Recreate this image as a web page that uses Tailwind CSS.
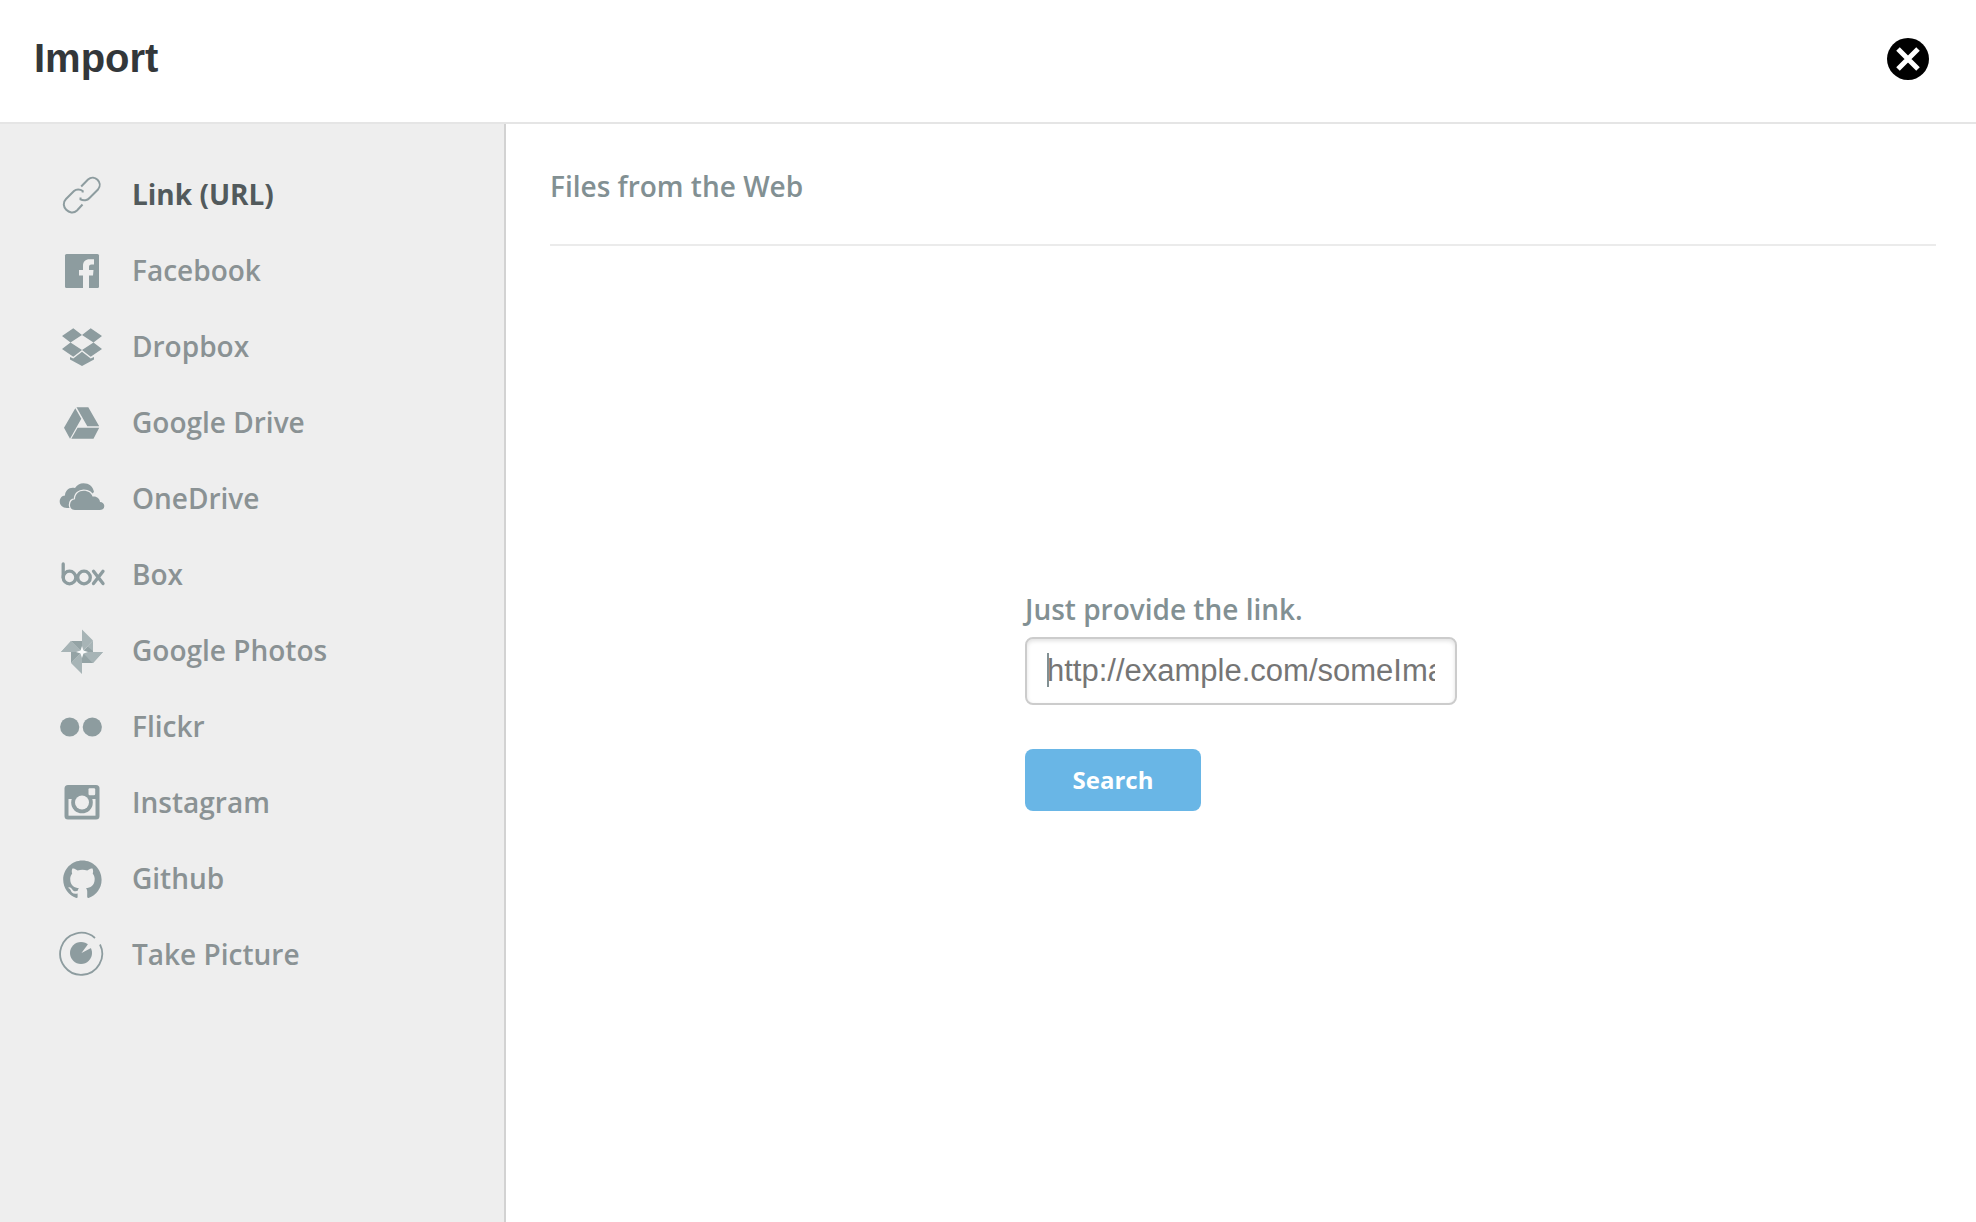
<!DOCTYPE html>
<html lang="en">
<head>
  <meta charset="UTF-8">
  <meta name="viewport" content="width=device-width, initial-scale=1.0">
  <title>Import</title>
  <script src="https://cdn.jsdelivr.net/npm/@tailwindcss/browser@4"></script>
</head>
<body class="flex min-h-screen flex-col bg-white font-['Open_Sans','Noto_Sans',sans-serif]">
  <header class="flex h-[124px] items-center justify-between border-b-2 border-[#e5e5e5] pr-[46px] pl-[34px]">
    <h1 class="pb-1.5 font-['Liberation_Sans',Arial,sans-serif] text-[40px] leading-12 font-bold text-[#33373a]">Import</h1>
    <button type="button" aria-label="Close" class="pb-1">
      <svg class="block size-[44px]" viewBox="0 0 44 44">
        <circle cx="22" cy="22" r="21" fill="#000"/>
        <path d="M12 12L32 32M32 12L12 32" stroke="#fff" stroke-width="5"/>
      </svg>
    </button>
  </header>

  <div class="flex grow">
    <nav class="w-[506px] shrink-0 border-r-2 border-[#d2d2d2] bg-[#eeeeee] pt-8 pl-14 text-[28px] leading-10 font-semibold text-[#8a9294]">
      <a href="#link" class="flex h-[76px] items-center gap-7 font-bold text-[#525a5c]">
        <svg class="size-12" viewBox="0 0 48 48" fill="none" stroke="#8d9c9f" stroke-width="2">
          <path d="M25.200 16.500L32 9.500C38.500 4 47.500 12.500 42 19.500L33.500 28C31.500 30.300 27.500 31 24.500 29.300V27.500"/>
          <path d="M26.700 22.500V21C24 18.800 20.200 19 18 21L10 29C3 36 14 47 21 40.500L26.500 34.500"/>
        </svg>
        Link (URL)
      </a>
      <a href="#facebook" class="flex h-[76px] items-center gap-7">
        <svg class="size-12" viewBox="0 0 48 48">
          <rect x="9" y="8" width="34" height="34" rx="1.500" fill="#8d9c9f"/>
          <path d="M27 42V29.500H23V24H27V20C27 15.500 29.500 13.300 33.500 13.300H38V18.500H35.500C33.500 18.500 33 19.500 33 21V24H37.500L37 29.500H33V42Z" fill="#eee"/>
        </svg>
        Facebook
      </a>
      <a href="#dropbox" class="flex h-[76px] items-center gap-7">
        <svg class="size-12" viewBox="0 0 48 48" fill="#8d9c9f">
          <path d="M17.300 6.300L26 13L14.500 20.500L6 14ZM34.700 6.300L46 14L37.500 20.500L26 13ZM14.500 20.500L26 28L17.300 34.700L6 27ZM37.500 20.500L46 27L34.700 34.700L26 28Z"/>
          <path d="M14 35L17.300 36.500L26 29.700L34.700 36.500L38 35V37.500L26 44L14 37.500Z"/>
        </svg>
        Dropbox
      </a>
      <a href="#google-drive" class="flex h-[76px] items-center gap-7">
        <svg class="size-12" viewBox="0 0 48 48" fill="#8d9c9f">
          <path d="M19.300 10.300L25.300 20.700L14 40.700L8 29.700ZM20.500 9.300H32.300L43.200 28.300H31.300ZM21.600 29.800H43.200L37.500 40.700H15.300Z"/>
        </svg>
        Google Drive
      </a>
      <a href="#onedrive" class="flex h-[76px] items-center gap-7">
        <svg class="size-12 overflow-visible" viewBox="0 0 48 48" fill="#8d9c9f">
          <path d="M11 34C6.500 34 3.700 31 3.700 27.500C3.700 24 6 21.800 9 21.500C9 16.500 13.500 12.500 19 14C21 11 24 9.300 27.500 9.300C33 9.300 37 12.500 38 18L20 34Z"/>
          <path d="M19 36C15.500 36 14 33.500 14 31C14 27.500 16 25.500 19 25.200C19 20 23 16.700 27.700 16.700C32 16.700 35.500 19 36.500 22.500C40.500 21.800 44 24.500 44 28C46.500 28 48.300 29.800 48.300 32C48.300 34.500 46.500 36 44 36Z" stroke="#eee" stroke-width="2.500" paint-order="stroke"/>
        </svg>
        OneDrive
      </a>
      <a href="#box" class="flex h-[76px] items-center gap-7">
        <svg class="size-12 overflow-visible" viewBox="0 0 48 48" fill="none" stroke="#8d9c9f" stroke-width="3.300" stroke-linecap="round">
          <circle cx="13.500" cy="27.500" r="6.300"/>
          <circle cx="28" cy="27.500" r="6.300"/>
          <path d="M7.200 14V27.500M37.500 21.300L47 33.600M47 21.300L37.500 33.600"/>
        </svg>
        Box
      </a>
      <a href="#google-photos" class="flex h-[76px] items-center gap-7">
        <svg class="size-12" viewBox="0 0 48 48">
          <path d="M26 3.500L37 14.500L26 26ZM47 26L37 37H26V26ZM26 48L15 37L26 26ZM5 26L15 15L26 26Z" fill="#a7b4b6"/>
          <path d="M15 15H26V26ZM37 15V26H26ZM37 37H26V26ZM15 37V26H26Z" fill="#94a3a5"/>
          <path d="M37 15V25L31.500 20.500ZM47 26L37 37L31.500 31.500L37 26ZM15 15L20 20L26 26H5Z" fill="#a7b4b6"/>
          <path d="M26 20L27.500 24.500L32 26L27.500 27.500L26 32L24.500 27.500L20 26L24.500 24.500Z" fill="#f8fafa"/>
        </svg>
        Google Photos
      </a>
      <a href="#flickr" class="flex h-[76px] items-center gap-7">
        <svg class="size-12" viewBox="0 0 48 48" fill="#8d9c9f">
          <circle cx="13.700" cy="25" r="9.600"/>
          <circle cx="36.300" cy="25" r="9.600"/>
        </svg>
        Flickr
      </a>
      <a href="#instagram" class="flex h-[76px] items-center gap-7">
        <svg class="size-12" viewBox="0 0 48 48" fill="#8d9c9f">
          <rect x="8.500" y="7" width="35" height="34.500" rx="3.500"/>
          <path d="M12.500 21H39.500V37.700H12.500Z" fill="#eee"/>
          <circle cx="26" cy="24.500" r="10.800"/>
          <circle cx="26" cy="24.500" r="7" fill="#eee"/>
          <rect x="32.500" y="10.300" width="6.700" height="7" rx="1.200" fill="#eee"/>
        </svg>
        Instagram
      </a>
      <a href="#github" class="flex h-[76px] items-center gap-7">
        <svg class="size-12" viewBox="0 0 48 48" fill="#8d9c9f">
          <path transform="translate(7.200 6.600) scale(2.400)" d="M8 0C3.580 0 0 3.580 0 8c0 3.540 2.290 6.530 5.470 7.590.4.070.55-.17.55-.38 0-.19-.01-.82-.01-1.490-2.010.37-2.530-.49-2.690-.94-.09-.23-.48-.94-.82-1.130-.28-.15-.68-.52-.01-.53.63-.01 1.080.58 1.230.82.72 1.210 1.870.87 2.330.66.07-.52.28-.87.51-1.070-1.780-.2-3.640-.89-3.640-3.950 0-.87.31-1.590.82-2.150-.08-.2-.36-1.020.08-2.120 0 0 .67-.21 2.200.82.64-.18 1.320-.27 2-.27s1.360.09 2 .27c1.530-1.040 2.200-.82 2.200-.82.44 1.100.16 1.920.08 2.120.51.56.82 1.270.82 2.150 0 3.070-1.870 3.750-3.650 3.950.29.25.54.73.54 1.480 0 1.070-.01 1.930-.01 2.200 0 .21.15.46.55.38A8.010 8.010 0 0 0 16 8c0-4.420-3.580-8-8-8z"/>
        </svg>
        Github
      </a>
      <a href="#take-picture" class="flex h-[76px] items-center gap-7">
        <svg class="size-12" viewBox="0 0 48 48">
          <path d="M39 8A21 21 0 1 0 44 14.500" fill="none" stroke="#8d9c9f" stroke-width="1.800"/>
          <circle cx="25" cy="23" r="11" fill="#8d9c9f"/>
          <path d="M25.500 23L32.500 13.500L36 17.500Z" fill="#eee"/>
        </svg>
        Take Picture
      </a>
    </nav>

    <main class="flex grow flex-col">
      <h2 class="mr-10 ml-11 border-b-2 border-[#ebebeb] pt-[42px] pb-[38px] text-[28px] leading-10 font-semibold text-[#829093]">Files from the Web</h2>
      <form class="flex grow flex-col items-center justify-center pb-[68px]">
        <div class="w-[432px]">
          <label for="url" class="block text-[28px] leading-10 font-semibold text-[#829093]">Just provide the link.</label>
          <div class="relative mt-2">
            <input type="text" id="url" placeholder="http://example.com/someImage.png" class="block h-[68px] w-full rounded-lg border-2 border-[#cccccc] px-5 font-['Liberation_Sans',Arial,sans-serif] text-[31px] text-[#757575] shadow-[inset_0_2px_4px_rgba(0,0,0,0.12)] placeholder:text-[#757575]">
            <span class="absolute top-4 left-[22px] h-[34px] w-0.5 bg-[#829093]"></span>
          </div>
          <button type="button" class="mt-11 block h-[62px] w-[176px] rounded-lg bg-[#69b6e6] text-[24px] leading-8 font-bold text-white">Search</button>
        </div>
      </form>
    </main>
  </div>
</body>
</html>
